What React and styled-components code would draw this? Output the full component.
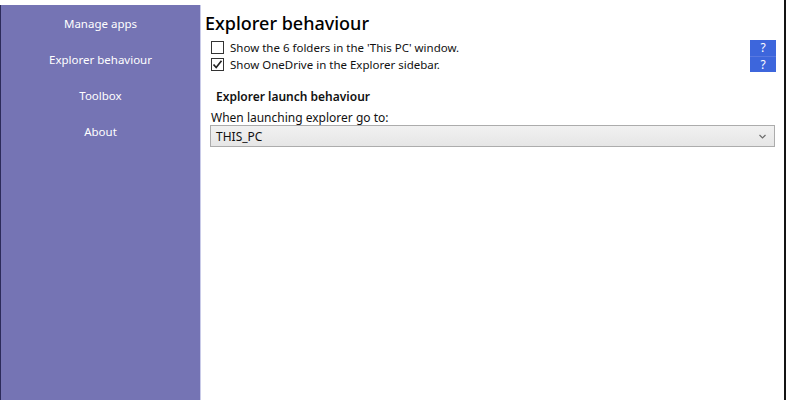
import React, { useState } from 'react';
import styled, { createGlobalStyle } from 'styled-components';

const GlobalStyle = createGlobalStyle`
  html, body {
    margin: 0;
    padding: 0;
    background: #ffffff;
  }
  #root {
    height: 400px;
  }
`;

const menuItems = ['Manage apps', 'Explorer behaviour', 'Toolbox', 'About'];

const App = () => {
  const [showFolders, setShowFolders] = useState(false);
  const [showOneDrive, setShowOneDrive] = useState(true);

  return (
    <>
      <GlobalStyle />
      <Window>
        <Sidebar>
          {menuItems.map((item) => (
            <MenuItem key={item}>{item}</MenuItem>
          ))}
        </Sidebar>
        <Content>
          <Title>Explorer behaviour</Title>
          <OptionsRow>
            <Options>
              <CheckRow>
                <Box checked={showFolders} onClick={() => setShowFolders(!showFolders)}>
                  {showFolders && <Tick />}
                </Box>
                <CheckLabel>Show the 6 folders in the 'This PC' window.</CheckLabel>
              </CheckRow>
              <CheckRow>
                <Box checked={showOneDrive} onClick={() => setShowOneDrive(!showOneDrive)}>
                  {showOneDrive && <Tick />}
                </Box>
                <CheckLabel>Show OneDrive in the Explorer sidebar.</CheckLabel>
              </CheckRow>
            </Options>
            <HelpStack>
              <HelpButton>?</HelpButton>
              <HelpButton divided>?</HelpButton>
            </HelpStack>
          </OptionsRow>
          <SectionTitle>Explorer launch behaviour</SectionTitle>
          <FieldLabel>When launching explorer go to:</FieldLabel>
          <Select>
            <span>THIS_PC</span>
            <Chevron viewBox="0 0 7 5">
              <path d="M0.5 1 L3.5 4 L6.5 1" fill="none" stroke="#6d6d6d" strokeWidth="1.2" />
            </Chevron>
          </Select>
        </Content>
      </Window>
    </>
  );
};

const Tick = () => (
  <svg width="11" height="11" viewBox="0 0 11 11">
    <path d="M1.5 5.5 L4.2 8.5 L9.5 1.8" fill="none" stroke="#222" strokeWidth="1.7" />
  </svg>
);

const Window = styled.div`
  display: flex;
  height: 400px;
  width: 786px;
  border-right: 2px solid #141414;
  font-family: 'Noto Sans', 'Open Sans', sans-serif;
  box-sizing: border-box;
`;

const Sidebar = styled.nav`
  width: 199px;
  margin-top: 5px;
  background-color: #7574b4;
  border-left: 1px solid #2c2b5a;
  border-right: 1px solid #c9cbe8;
  display: flex;
  flex-direction: column;
  align-items: center;
  padding-top: 10px;
  gap: 19px;
`;

const MenuItem = styled.div`
  color: #ffffff;
  font-size: 11.5px;
  line-height: 17px;
  cursor: pointer;
`;

const Content = styled.main`
  flex: 1;
  padding: 11px 9px 0 4px;
  display: flex;
  flex-direction: column;
`;

const Title = styled.h1`
  margin: 0;
  font-size: 18px;
  font-weight: 500;
  line-height: 25px;
  color: #000000;
`;

const OptionsRow = styled.div`
  display: flex;
  justify-content: space-between;
  align-items: flex-start;
  margin-top: 4px;
`;

const Options = styled.div`
  display: flex;
  flex-direction: column;
  gap: 3px;
  padding-left: 6px;
`;

const CheckRow = styled.label`
  display: flex;
  align-items: center;
  gap: 6px;
  height: 14px;
`;

const Box = styled.span`
  width: 11px;
  height: 11px;
  border: 1px solid #333333;
  background: #ffffff;
  display: flex;
  align-items: center;
  justify-content: center;
`;

const CheckLabel = styled.span`
  font-size: 11.5px;
  color: #111111;
`;

const HelpStack = styled.div`
  display: flex;
  flex-direction: column;
  width: 26px;
  height: 32px;
  margin-right: -1px;
  background: #3d66dc;
`;

const HelpButton = styled.div`
  height: 16px;
  box-sizing: border-box;
  background: #3d66dc;
  color: #ffffff;
  font-size: 12px;
  line-height: 15px;
  text-align: center;
  border-top: ${({ divided }) => (divided ? '1px solid #5878e0' : 'none')};
`;

const SectionTitle = styled.div`
  margin-top: 16px;
  padding-left: 11px;
  font-size: 12px;
  font-weight: 600;
  color: #111111;
`;

const FieldLabel = styled.div`
  margin-top: 4px;
  padding-left: 6px;
  font-size: 12px;
  color: #111111;
`;

const Select = styled.div`
  margin: -1px 0 0 5px;
  height: 22px;
  border: 1px solid #acacac;
  background: linear-gradient(#f1f1f1, #e6e6e6);
  display: flex;
  align-items: center;
  justify-content: space-between;
  padding: 0 8px 0 5px;
  font-size: 12px;
  color: #111111;
  box-sizing: border-box;
`;

const Chevron = styled.svg`
  width: 7px;
  height: 5px;
`;

export default App;
